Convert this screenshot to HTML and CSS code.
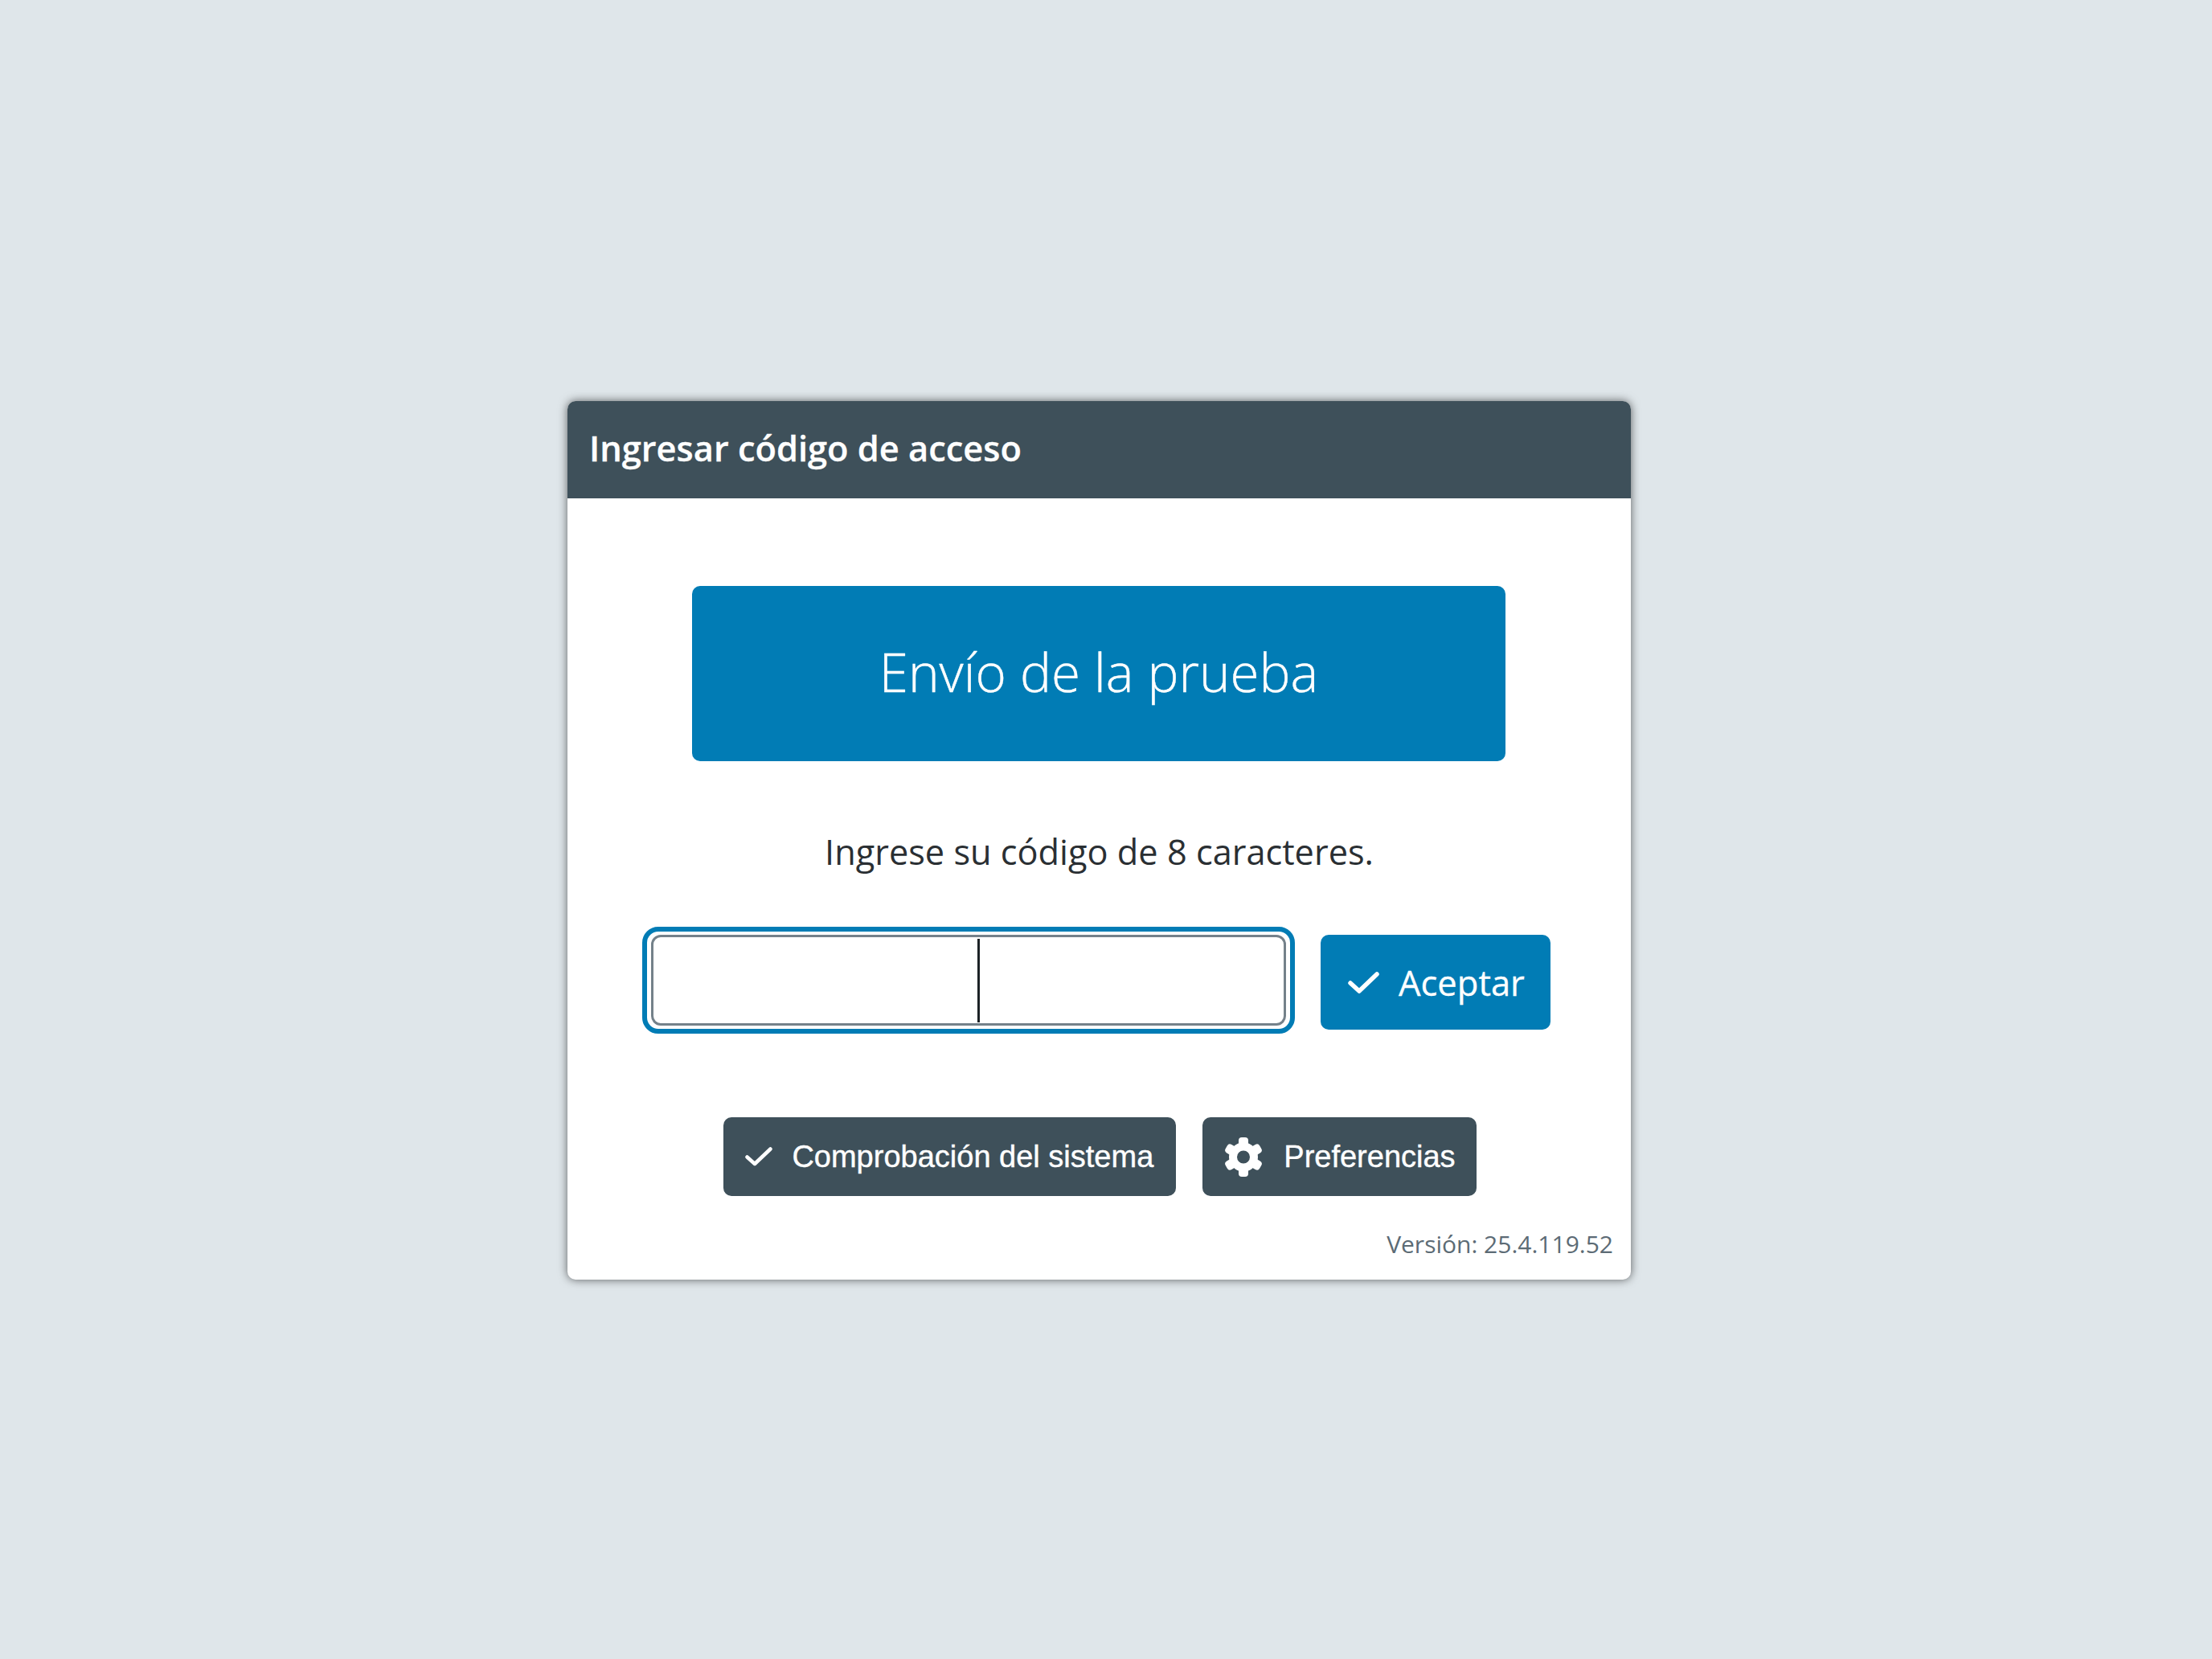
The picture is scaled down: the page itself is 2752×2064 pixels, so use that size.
FILE: index.html
```html
<!DOCTYPE html>
<html lang="es">
<head>
    <meta charset="UTF-8">
    <meta name="viewport" content="width=device-width, initial-scale=1.0">
    <title>Ingresar código de acceso</title>
    <link rel="stylesheet" href="styles.css">
</head>
<body>
    <div class="login-card">
        <div class="card-header">Ingresar código de acceso</div>
        <div class="card-body">
            <div class="banner">Envío de la prueba</div>
            <p class="prompt">Ingrese su código de 8 caracteres.</p>
            <div class="code-row">
                <div class="code-focus">
                    <div class="code-input"><span class="caret"></span></div>
                </div>
                <button class="btn btn-accept">
                    <svg class="icon-check" viewBox="0 0 39 27"><polyline points="3,14 14,24 36,3"/></svg>
                    Aceptar
                </button>
            </div>
            <div class="tool-row">
                <button class="btn btn-tool btn-system">
                    <svg class="icon-check-small" viewBox="0 0 34 24"><polyline points="2.5,12.5 12,21 31.5,2.5"/></svg>
                    Comprobación del sistema
                </button>
                <button class="btn btn-tool btn-prefs">
                    <svg class="icon-gear" viewBox="0 0 46 49">
                        <circle class="gear-ring" cx="23" cy="24.5" r="13"/>
                        <rect class="gear-tooth" x="17" y="0" width="12" height="14" rx="4"/>
                        <rect class="gear-tooth" x="17" y="0" width="12" height="14" rx="4" transform="rotate(60 23 24.5)"/>
                        <rect class="gear-tooth" x="17" y="0" width="12" height="14" rx="4" transform="rotate(120 23 24.5)"/>
                        <rect class="gear-tooth" x="17" y="0" width="12" height="14" rx="4" transform="rotate(180 23 24.5)"/>
                        <rect class="gear-tooth" x="17" y="0" width="12" height="14" rx="4" transform="rotate(240 23 24.5)"/>
                        <rect class="gear-tooth" x="17" y="0" width="12" height="14" rx="4" transform="rotate(300 23 24.5)"/>
                    </svg>
                    Preferencias
                </button>
            </div>
            <div class="version">Versión: 25.4.119.52</div>
        </div>
    </div>
</body>
</html>
```

FILE: styles.css
```css
* {
    box-sizing: border-box;
}

body {
    margin: 0;
    padding: 499px 0 0 706px;
    min-height: 100vh;
    background: #dfe6ea;
    font-family: "Open Sans", sans-serif;
}

.login-card {
    width: 1323px;
    background: #fff;
    border-radius: 10px;
    box-shadow: 0 0 12px rgba(0, 0, 0, 0.6);
    overflow: hidden;
}

.card-header {
    height: 121px;
    padding-left: 27px;
    background: #3e505a;
    color: #fff;
    font-size: 43.4px;
    font-weight: 600;
    line-height: 117px;
    -webkit-text-stroke: 0.3px #fff;
}

.card-body {
    padding: 109px 22px 24px 0;
}

.banner {
    height: 218px;
    margin-left: 155px;
    width: 1012px;
    background: #017cb5;
    border-radius: 10px;
    color: #fff;
    font-size: 65.5px;
    font-weight: 300;
    line-height: 214px;
    text-align: center;
    -webkit-text-stroke: 0.4px #fff;
}

.prompt {
    width: 1323px;
    margin: 83px 0 0;
    color: #2a2f33;
    font-size: 43.3px;
    line-height: 60px;
    text-align: center;
}

.code-row {
    display: flex;
    align-items: flex-start;
    gap: 32px;
    margin: 63px 0 0 93px;
}

.code-focus {
    width: 812px;
    height: 133px;
    padding: 4px 5px;
    border: 6px solid #017cb5;
    border-radius: 20px;
}

.code-input {
    height: 113px;
    padding: 2px 0 1px 403px;
    background: #fff;
    border: 3px solid #74818a;
    border-radius: 12px;
}

.caret {
    display: block;
    width: 3px;
    height: 100%;
    background: #1c2226;
}

.btn {
    display: flex;
    align-items: center;
    border: 0;
    border-radius: 10px;
    color: #fff;
}

.btn-accept {
    height: 118px;
    margin-top: 10px;
    padding: 0 32px 0 34px;
    gap: 24px;
    background: #017cb5;
    font-family: "Open Sans", sans-serif;
    font-size: 43.5px;
    -webkit-text-stroke: 0.3px #fff;
}

.tool-row {
    display: flex;
    justify-content: center;
    gap: 33px;
    width: 1325px;
    margin-top: 104px;
}

.btn-tool {
    height: 98px;
    background: #3e505a;
    font-family: "Liberation Sans", Arial, sans-serif;
    font-size: 38px;
    -webkit-text-stroke: 0.4px #fff;
}

.btn-system {
    padding: 0 28px 0 27px;
    gap: 24px;
}

.btn-prefs {
    padding: 0 26px 0 28px;
    gap: 27px;
}

.icon-check {
    width: 39px;
    height: 27px;
}

.icon-check-small {
    width: 34px;
    height: 24px;
}

.icon-check polyline,
.icon-check-small polyline {
    fill: none;
    stroke: #fff;
    stroke-linecap: round;
    stroke-linejoin: round;
}

.icon-check polyline {
    stroke-width: 5.5;
}

.icon-check-small polyline {
    stroke-width: 4.5;
}

.icon-gear {
    width: 46px;
    height: 49px;
}

.gear-ring {
    fill: none;
    stroke: #fff;
    stroke-width: 10;
}

.gear-tooth {
    fill: #fff;
}

.version {
    margin-top: 40px;
    color: #5c6b75;
    font-size: 30px;
    line-height: 40px;
    text-align: right;
}
```
